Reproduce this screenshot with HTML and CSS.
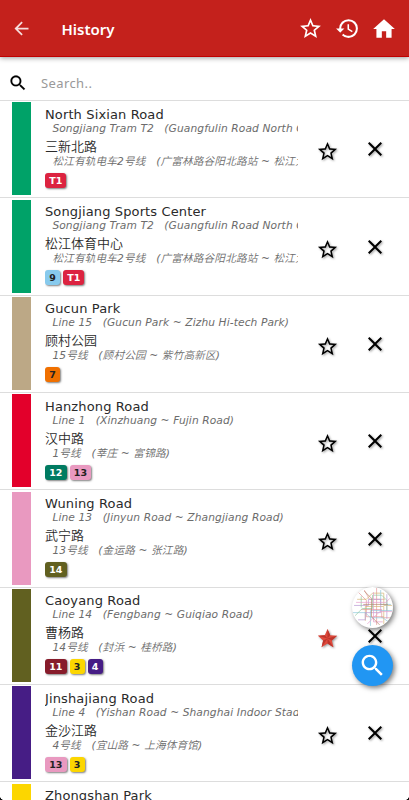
FILE: index.html
```html
<!DOCTYPE html>
<html lang="en">
<head>
  <meta charset="UTF-8" />
  <meta name="viewport" content="width=device-width, initial-scale=1" />
  <title>History</title>
  <link rel="stylesheet" href="styles.css">
</head>
<body>
  <svg class="symbols">
    <symbol id="star" viewBox="0 0 24 24"><path d="M22 9.24l-7.19-.62L12 2 9.19 8.63 2 9.24l5.46 4.73L5.82 21 12 17.27 18.18 21l-1.63-7.03L22 9.24zM12 15.4l-3.76 2.27 1-4.28-3.32-2.88 4.38-.38L12 6.1l1.71 4.04 4.38.38-3.32 2.88 1 4.28L12 15.4z"/></symbol>
    <symbol id="close" viewBox="0 0 24 24"><path d="M19 6.41L17.59 5 12 10.59 6.41 5 5 6.41 10.59 12 5 17.59 6.41 19 12 13.41 17.59 19 19 17.59 13.41 12z"/></symbol>
    <symbol id="search" viewBox="0 0 24 24"><path d="M15.5 14h-.79l-.28-.27C15.41 12.59 16 11.11 16 9.5 16 5.91 13.09 3 9.5 3S3 5.91 3 9.5 5.91 16 9.5 16c1.61 0 3.09-.59 4.23-1.57l.27.28v.79l5 4.99L20.49 19l-4.99-5zm-6 0C7.01 14 5 11.99 5 9.5S7.01 5 9.5 5 14 7.01 14 9.5 11.99 14 9.5 14z"/></symbol>
  </svg>

  <header>
    <svg class="back" viewBox="0 0 24 24"><path d="M20 11H7.83l5.59-5.59L12 4l-8 8 8 8 1.41-1.41L7.83 13H20v-2z"/></svg>
    <h1>History</h1>
    <nav>
      <svg class="nav-star" viewBox="0 0 24 24"><use href="#star"/></svg>
      <svg class="nav-history" viewBox="0 0 24 24"><path d="M13 3a9 9 0 0 0-9 9H1l3.89 3.89.07.14L9 12H6c0-3.87 3.13-7 7-7s7 3.13 7 7-3.13 7-7 7c-1.93 0-3.68-.79-4.94-2.06l-1.42 1.42A8.954 8.954 0 0 0 13 21a9 9 0 0 0 0-18zm-1 5v5l4.28 2.54.72-1.21-3.5-2.08V8H12z"/></svg>
      <svg class="nav-home" viewBox="0 0 24 24"><path d="M10 20v-6h4v6h5v-8h3L12 3 2 12h3v8z"/></svg>
    </nav>
  </header>

  <div class="search-bar">
    <svg viewBox="0 0 24 24"><use href="#search"/></svg>
    <span>Search..</span>
  </div>

  <main id="stations"></main>

  <div class="fab map">
    <svg viewBox="0 0 40 40">
      <g fill="none" stroke-width=".7">
        <path stroke="#e59a9a" d="M6 5l8 8v16h17M12 3l5 9h15M24 1v36M9 22h20v8h8"/>
        <path stroke="#d8b878" d="M5 12h9l6-6h11v12h8M13 33V19h18v17"/>
        <path stroke="#8fc9dd" d="M1 25h12l5 5h12l7 5M18 38V23h21M28 3v14h10"/>
        <path stroke="#b79ad4" d="M2 18h14v-6h12v13H13v7H6M34 7v24"/>
        <path stroke="#94cba2" d="M3 28l7-7h10V8h9l5 5v10M9 9v11"/>
        <path stroke="#e6a0cb" d="M4 15h29l4-4M21 5v29h9M15 36l12-12h12"/>
        <path stroke="#b78d73" d="M12 4l7 7v18l8 8M11 17h24"/>
      </g>
    </svg>
  </div>
  <div class="fab find">
    <svg viewBox="0 0 24 24"><use href="#search"/></svg>
  </div>
  <i class="corner left"></i>
  <i class="corner right"></i>

  <script src="script.js"></script>
</body>
</html>
```

FILE: styles.css
```css
* {
  box-sizing: border-box;
}

body {
  margin: 0;
  height: 800px;
  overflow: hidden;
  position: relative;
  background: #fff;
  color: #2a2a2a;
  font-family: "DejaVu Sans", "Noto Sans CJK SC", sans-serif;
}

.symbols {
  display: none;
}

header {
  height: 57px;
  background: #c4211c;
  border-bottom: 1px solid #c00000;
  box-shadow: 0 1px 5px rgba(0,0,0,0.4);
  color: #fff;
  fill: #fff;
  display: flex;
  align-items: center;
  padding: 1px 14px 0 11px;
}

header h1 {
  margin: 0 0 0 29.5px;
  font: 600 15px/20px "Noto Sans", sans-serif;
}

.back {
  width: 21px;
  height: 21px;
  opacity: 0.85;
}

header nav {
  display: flex;
  align-items: center;
  margin-left: auto;
}

.nav-star {
  width: 25px;
  height: 25px;
}

.nav-history {
  width: 25px;
  height: 25px;
  margin-left: 12px;
}

.nav-home {
  width: 26px;
  height: 26px;
  margin: 0 -2px 0 11px;
}

.search-bar {
  height: 43px;
  padding: 9px 8px 0;
  display: flex;
  align-items: center;
}

.search-bar svg {
  width: 20px;
  height: 20px;
  fill: #000;
  stroke: #000;
  stroke-width: 0.2;
}

.search-bar span {
  margin-left: 13px;
  color: #999;
  font: 13px/18px "Noto Sans", sans-serif;
  letter-spacing: 0.4px;
}

main {
  height: 700px;
  overflow: hidden;
}

.station {
  height: 97.33px;
  border-top: 1px solid #ddd;
  padding: 1.3px 0 1.5px 12.3px;
  display: flex;
}

.bar {
  width: 18.7px;
  height: 93px;
  flex: none;
}

.info {
  width: 253px;
  margin-left: 14px;
  padding-top: 4.4px;
  flex: none;
  overflow: hidden;
  white-space: pre;
}

.name {
  font-size: 13px;
  line-height: 16px;
  letter-spacing: 0.13px;
}

.route {
  font-size: 10.67px;
  line-height: 12px;
  padding-left: 7.4px;
  font-style: italic;
  letter-spacing: 0.1px;
  color: #6c6c6c;
}

.name.zh {
  margin-top: 4px;
  font-weight: 350;
  letter-spacing: 0;
}

.route.zh {
  line-height: 14px;
  font-weight: 350;
  letter-spacing: 0.13px;
}

.lines {
  display: flex;
  gap: 3px;
  margin-top: 4px;
}

.line {
  height: 15px;
  padding: 0 4.2px;
  border-radius: 3px;
  box-shadow: 1px 1px 2px rgba(0,0,0,0.5);
  font-size: 9.5px;
  font-weight: bold;
  line-height: 15px;
}

.actions {
  display: flex;
  margin-left: 18px;
  padding-top: 38px;
  filter: drop-shadow(1px 1px 1px rgba(0,0,0,0.4));
}

.actions svg {
  width: 23px;
  height: 23px;
  fill: #000;
}

.actions .close {
  width: 24px;
  height: 24px;
  margin: -3px 0 0 24px;
}

.fab {
  position: absolute;
  left: 352px;
  width: 41px;
  height: 41px;
  border-radius: 50%;
  box-shadow: 2px 2px 5px rgba(0,0,0,0.5);
  overflow: hidden;
}

.map {
  top: 587px;
  background: #fff;
}

.map svg {
  width: 41px;
  height: 41px;
}

.find {
  top: 645px;
  background: #2196f3;
  display: flex;
  align-items: center;
  justify-content: center;
}

.find svg {
  width: 29px;
  height: 29px;
  fill: #fff;
}

.corner {
  position: absolute;
  bottom: 0;
  width: 5px;
  height: 5px;
}

.left {
  left: 0;
  background: radial-gradient(circle at 100% 0, transparent 5px, #111 5.5px);
}

.right {
  right: 0;
  background: radial-gradient(circle at 0 0, transparent 5px, #111 5.5px);
}
```

FILE: script.js
```js
const lineColors = {
  T1: ['#dc2340', '#fff'],
  3: ['#fcd600', '#222'],
  4: ['#461d85', '#fff'],
  7: ['#f07000', '#222'],
  9: ['#87caed', '#222'],
  11: ['#871c2b', '#fff'],
  12: ['#007b61', '#fff'],
  13: ['#e999c0', '#222'],
  14: ['#616020', '#fff']
};

const stations = [
  { color: '#00a268', name: 'North Sixian Road', route: 'Songjiang Tram T2   (Guangfulin Road North Guyang Road ~ Songjiang)', zh: '三新北路', zhRoute: '松江有轨电车2号线   (广富林路谷阳北路站 ~ 松江大学城)', lines: ['T1'] },
  { color: '#00a268', name: 'Songjiang Sports Center', route: 'Songjiang Tram T2   (Guangfulin Road North Guyang Road ~ Songjiang)', zh: '松江体育中心', zhRoute: '松江有轨电车2号线   (广富林路谷阳北路站 ~ 松江大学城)', lines: ['9', 'T1'] },
  { color: '#bca886', name: 'Gucun Park', route: 'Line 15   (Gucun Park ~ Zizhu Hi-tech Park)', zh: '顾村公园', zhRoute: '15号线   (顾村公园 ~ 紫竹高新区)', lines: ['7'] },
  { color: '#e3002b', name: 'Hanzhong Road', route: 'Line 1   (Xinzhuang ~ Fujin Road)', zh: '汉中路', zhRoute: '1号线   (莘庄 ~ 富锦路)', lines: ['12', '13'] },
  { color: '#e999c0', name: 'Wuning Road', route: 'Line 13   (Jinyun Road ~ Zhangjiang Road)', zh: '武宁路', zhRoute: '13号线   (金运路 ~ 张江路)', lines: ['14'] },
  { color: '#616020', name: 'Caoyang Road', route: 'Line 14   (Fengbang ~ Guiqiao Road)', zh: '曹杨路', zhRoute: '14号线   (封浜 ~ 桂桥路)', lines: ['11', '3', '4'], starred: true },
  { color: '#461d85', name: 'Jinshajiang Road', route: 'Line 4   (Yishan Road ~ Shanghai Indoor Stadium)', zh: '金沙江路', zhRoute: '4号线   (宜山路 ~ 上海体育馆)', lines: ['13', '3'] },
  { color: '#fcd600', name: 'Zhongshan Park', route: '', zh: '', zhRoute: '', lines: [] }
];

const emptyStar = '<svg viewBox="0 0 24 24"><use href="#star"/></svg>';
// faceted star for favourites
const fullStar = `<svg viewBox="0 0 24 24"><path fill="#e04a3c" d="M12 2l2.81 6.62 7.19.62-5.45 4.73L18.18 21 12 17.27 5.82 21l1.64-7.03L2 9.24l7.19-.61z"/>
  <path fill="#bd352c" d="M12 2l2.81 6.62L12 12zM22 9.24l-5.45 4.73L12 12zM18.18 21L12 17.27V12zM5.82 21l1.64-7.03L12 12zM2 9.24l7.19-.61L12 12z"/></svg>`;

document.getElementById('stations').innerHTML = stations.map(s => `
  <div class="station">
    <div class="bar" style="background:${s.color}"></div>
    <div class="info"><div class="name">${s.name}</div><div class="route">${s.route}</div><div class="name zh">${s.zh}</div><div class="route zh">${s.zhRoute}</div><div class="lines">${s.lines.map(l => `<span class="line" style="background:${lineColors[l][0]};color:${lineColors[l][1]}">${l}</span>`).join('')}</div></div>
    <div class="actions">${s.starred ? fullStar : emptyStar}<svg class="close" viewBox="0 0 24 24"><use href="#close"/></svg></div>
  </div>`).join('');
```
